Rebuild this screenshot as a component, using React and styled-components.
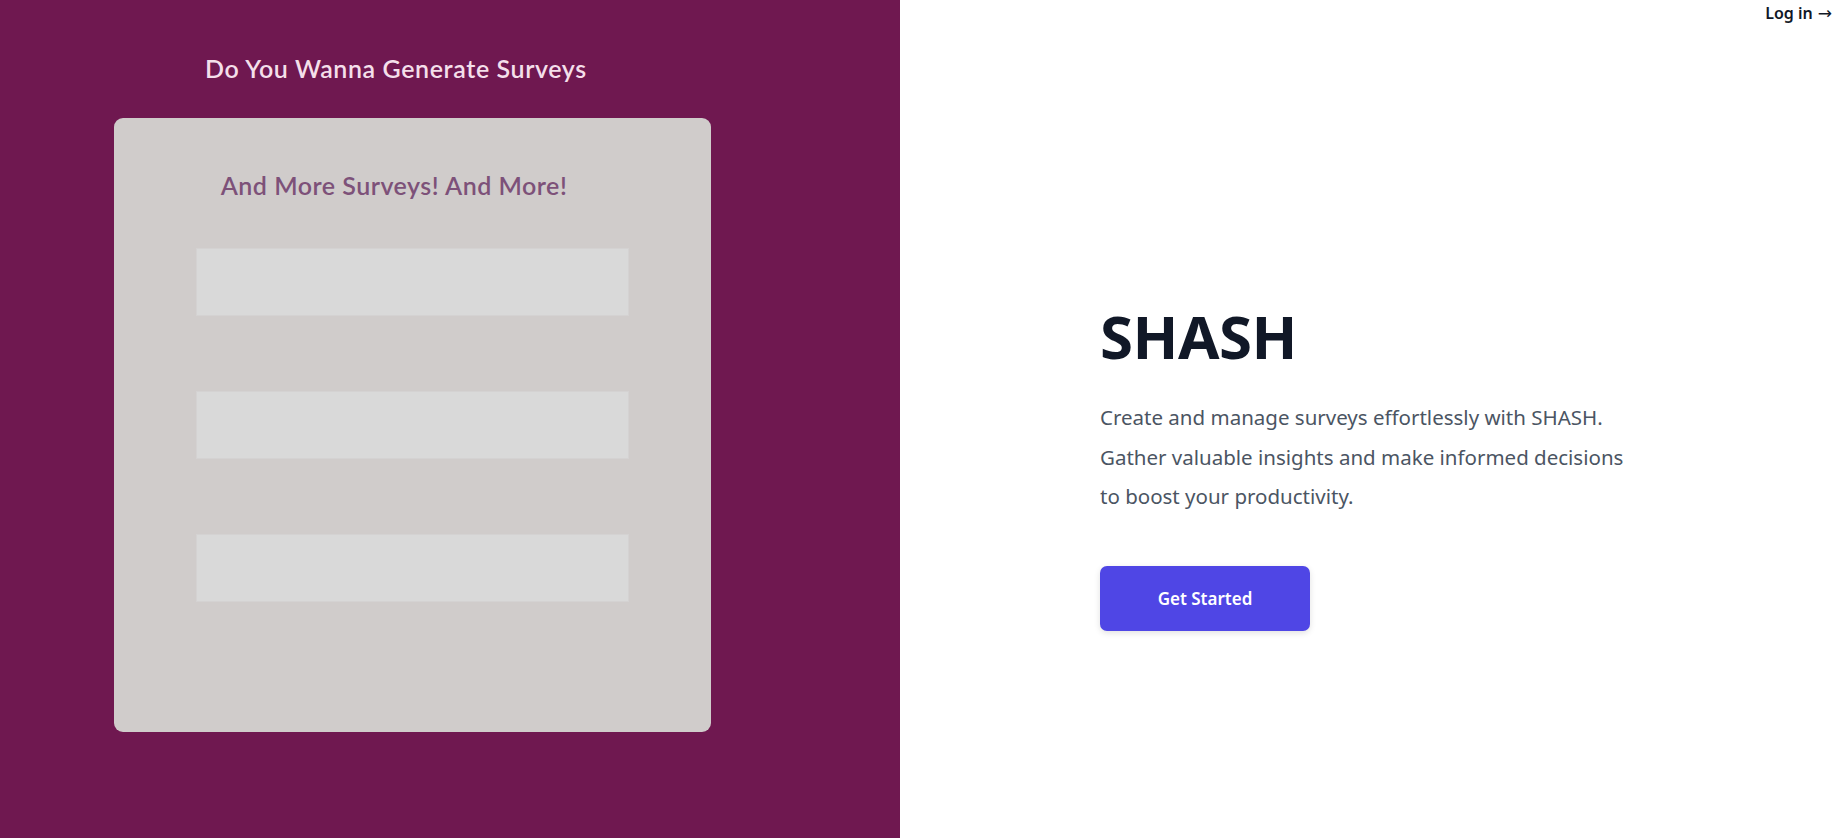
import React from 'react';
import styled, { createGlobalStyle } from 'styled-components';

const GlobalStyle = createGlobalStyle`
    * { box-sizing: border-box; }
    html, body { margin: 0; padding: 0; height: 100%; }
    body { font-family: "Noto Sans", "Open Sans", sans-serif; background: #ffffff; }
    #root { height: 100%; }
`;

const Page = styled.div`
    display: flex;
    width: 100%;
    height: 838px;
    overflow: hidden;
`;

const LeftPanel = styled.section`
    display: flex;
    flex-direction: column;
    width: 900px;
    flex-shrink: 0;
    background-color: #6f1850;
    padding: 51px 0 0 114px;
`;

const PanelTitle = styled.h2`
    margin: 0 0 33px 91px;
    font-family: "Lato", "Noto Sans", sans-serif;
    font-weight: 600;
    font-size: 25px;
    line-height: 34px;
    letter-spacing: 0.6px;
    color: #f4dfea;
`;

const Card = styled.div`
    display: flex;
    flex-direction: column;
    align-items: center;
    width: 597px;
    height: 614px;
    background-color: #d0cccb;
    border-radius: 9px;
    padding-top: 50px;
`;

const CardTitle = styled.h3`
    margin: 0 0 46px -37px;
    font-family: "Lato", "Noto Sans", sans-serif;
    font-weight: 600;
    font-size: 25px;
    line-height: 34px;
    letter-spacing: 0.5px;
    color: #7d5179;
`;

const Fields = styled.div`
    display: flex;
    flex-direction: column;
    gap: 75px;
`;

const Field = styled.input`
    display: block;
    width: 433px;
    height: 68px;
    border: 1px solid #d4d2d2;
    background-color: #d9d9d9;
    outline: none;
    padding: 0 16px;
    font-size: 18px;
`;

const RightPanel = styled.section`
    flex: 1;
    display: flex;
    flex-direction: column;
    background: #ffffff;
`;

const TopBar = styled.header`
    display: flex;
    justify-content: flex-end;
    padding: 1px 13px 0 0;
`;

const LoginLink = styled.a`
    display: flex;
    align-items: center;
    gap: 5px;
    font-family: "Noto Sans", sans-serif;
    font-size: 16px;
    font-weight: 600;
    line-height: 24px;
    color: #111827;
    text-decoration: none;
    cursor: pointer;
`;

const Arrow = styled.span`
    font-family: "DejaVu Sans", sans-serif;
    font-size: 17px;
    font-weight: 400;
`;

const Hero = styled.div`
    display: flex;
    flex-direction: column;
    align-items: flex-start;
    padding: 277px 0 0 200px;
`;

const Brand = styled.h1`
    margin: 0;
    font-family: "Noto Sans", sans-serif;
    font-size: 60px;
    font-weight: 700;
    line-height: 68px;
    letter-spacing: -0.5px;
    color: #111827;
`;

const Lead = styled.p`
    margin: 28px 0 0 0;
    max-width: 545px;
    font-family: "Noto Sans", sans-serif;
    font-size: 20.5px;
    line-height: 39.5px;
    color: #4b5563;
`;

const StartButton = styled.button`
    margin-top: 49px;
    width: 210px;
    height: 65px;
    border: none;
    border-radius: 7px;
    background-color: #4f46e5;
    color: #ffffff;
    font-family: "Noto Sans", sans-serif;
    font-size: 17px;
    font-weight: 600;
    box-shadow: 0 2px 6px rgba(0, 0, 0, 0.12);
    cursor: pointer;
`;

const App = () => {
    return (
        <>
            <GlobalStyle />
            <Page>
                <LeftPanel>
                    <PanelTitle>Do You Wanna Generate Surveys</PanelTitle>
                    <Card>
                        <CardTitle>And More Surveys! And More!</CardTitle>
                        <Fields>
                            <Field type="text" />
                            <Field type="text" />
                            <Field type="text" />
                        </Fields>
                    </Card>
                </LeftPanel>
                <RightPanel>
                    <TopBar>
                        <LoginLink>Log in <Arrow>&rarr;</Arrow></LoginLink>
                    </TopBar>
                    <Hero>
                        <Brand>SHASH</Brand>
                        <Lead>
                            Create and manage surveys effortlessly with SHASH. Gather valuable insights and make informed decisions to boost your productivity.
                        </Lead>
                        <StartButton>Get Started</StartButton>
                    </Hero>
                </RightPanel>
            </Page>
        </>
    );
};

export default App;
